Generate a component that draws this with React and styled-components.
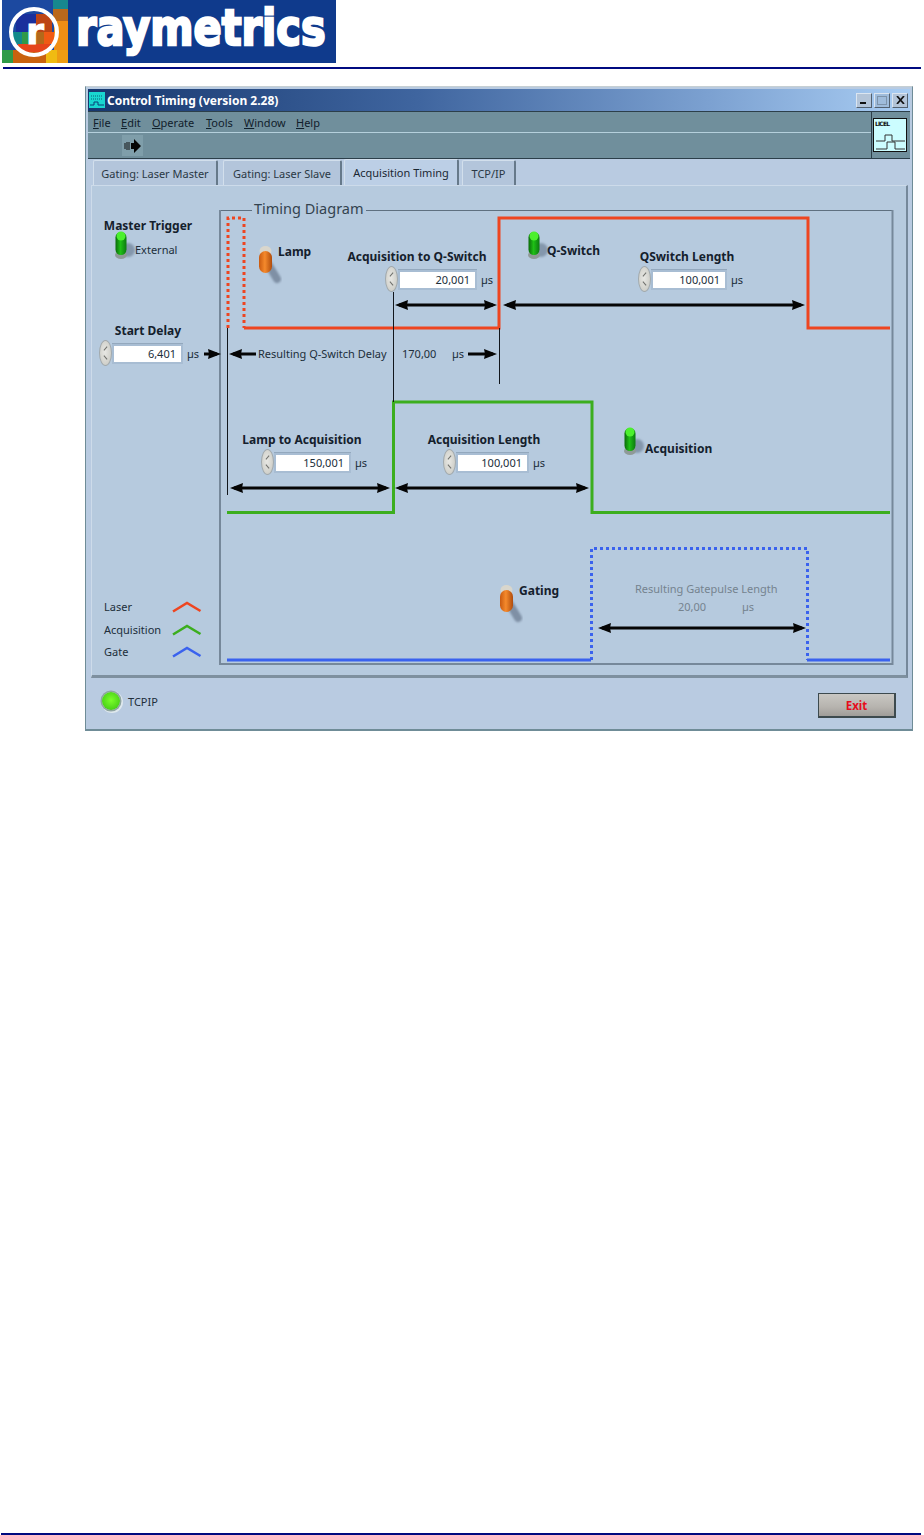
import React from 'react';
import styled, { createGlobalStyle } from 'styled-components';

const UI_FONT = '"Noto Sans", "DejaVu Sans", sans-serif';

const GlobalStyle = createGlobalStyle`
  html, body { margin: 0; padding: 0; background: #fff; }
  body { font-family: ${UI_FONT}; color: #14202c; }
`;

const Page = styled.div`
  width: 924px;
  height: 1535px;
  display: flex;
  flex-direction: column;
  overflow: hidden;
`;

const LogoBar = styled.div`
  margin-left: 2px;
  width: 334px;
  height: 63px;
  background: #0f3a8c;
`;

const HeaderRule = styled.div`
  margin: 4px 3px 0 3px;
  height: 2px;
  background: #000a80;
`;

const FooterRule = styled.div`
  margin: auto 3px 0 1px;
  height: 2px;
  background: #000a80;
`;

const Window = styled.div`
  margin: 17px 0 0 85px;
  width: 828px;
  height: 645px;
  display: flex;
  flex-direction: column;
  background: #b9cbe1;
  border: 1px solid #6f8c97;
  border-top-color: #c6cfd3;
  border-bottom-width: 2px;
  box-sizing: border-box;
  padding: 2px 2px 0 2px;
`;

const TitleBar = styled.div`
  height: 22px;
  display: flex;
  align-items: center;
  padding: 0 2px 0 1px;
  background: linear-gradient(90deg, #17386f 0%, #3f659f 40%, #7ba0d0 75%, #a9cdf3 100%);
`;

const TitleText = styled.span`
  margin-left: 2px;
  flex: 1;
  color: #fff;
  font-size: 12px;
  font-weight: 700;
  white-space: nowrap;
`;

const WindowButton = styled.button`
  width: 16px;
  height: 15px;
  margin-left: 2px;
  padding: 0;
  display: flex;
  align-items: center;
  justify-content: center;
  background: ${({ $disabled }) => ($disabled ? '#9fbcdb' : '#b3c4d8')};
  border: 1px solid;
  border-color: #dbe5f0 #52606e #52606e #dbe5f0;
`;

const MenuArea = styled.div`
  height: 46px;
  display: flex;
  background: #708f9c;
  border-top: 1px solid #2c3f4a;
  border-bottom: 1px solid #2c3f4a;
`;

const MenuColumn = styled.div`
  flex: 1;
  display: flex;
  flex-direction: column;
  border-right: 1px solid #2c3f4a;
`;

const MenuBar = styled.div`
  height: 20px;
  display: grid;
  grid-template-columns: 28px 31px 54px 38px 52px 30px;
  align-items: center;
  padding-left: 5px;
  border-bottom: 1px solid #b5d0dc;
`;

const MenuItem = styled.span`
  font-size: 11px;
  color: #10202b;
  u { text-underline-offset: 1px; }
`;

const ToolBar = styled.div`
  flex: 1;
  display: flex;
  align-items: center;
  padding-left: 34px;
`;

const RunButton = styled.div`
  width: 21px;
  height: 21px;
  display: flex;
  align-items: center;
  justify-content: center;
  background: #7f9eaa;
`;

const IconSlot = styled.div`
  width: 38px;
  padding: 6px 0 0 1px;
  box-sizing: border-box;
`;

const TabStrip = styled.div`
  height: 26px;
  display: flex;
  align-items: flex-end;
  padding-left: 5px;
  background: #b9cbe1;
`;

const Tab = styled.div`
  height: ${({ $active }) => ($active ? 26 : 25)}px;
  width: ${({ $w }) => $w}px;
  margin-left: ${({ $gap }) => $gap}px;
  display: flex;
  align-items: center;
  justify-content: center;
  box-sizing: border-box;
  font-size: 11px;
  white-space: nowrap;
  color: ${({ $active }) => ($active ? '#1a2733' : '#2a3844')};
  background: ${({ $active }) => ($active ? '#bccfe6' : '#b3c5db')};
  border-top: 1px solid #d2dfec;
  border-left: 1px solid #d2dfec;
  border-right: 2px solid #66798a;
  border-radius: 2px 2px 0 0;
`;

const Panel = styled.div`
  position: relative;
  margin: 0 2px 0 3px;
  height: 493px;
  background: #b6cade;
  border-top: 1px solid #cddbea;
  border-left: 1px solid #cddbea;
  border-right: 2px solid #75889a;
  border-bottom: 3px solid #7e909f;
  box-sizing: border-box;
`;

// things below sit on the diagram canvas: coordinates are page pixels minus the panel's inner origin
const ORIGIN_X = 92;
const ORIGIN_Y = 186;

const Wires = styled.svg`
  position: absolute;
  left: 0;
  top: 0;
  width: 814px;
  height: 489px;
`;

const DiagramTitle = styled.span`
  position: absolute;
  left: ${252 - ORIGIN_X}px;
  top: ${199 - ORIGIN_Y}px;
  padding: 0 2px;
  font-size: 14.5px;
  line-height: 18px;
  color: #33434f;
  background: #b6cade;
  white-space: nowrap;
`;

const OnCanvas = styled.div`
  position: absolute;
  left: ${({ $x }) => $x - ORIGIN_X}px;
  top: ${({ $y }) => $y - ORIGIN_Y}px;
`;

const Caption = styled.span`
  display: block;
  font-size: ${({ $bold }) => ($bold ? 12 : 11)}px;
  line-height: 16px;
  font-weight: ${({ $bold }) => ($bold ? 700 : 400)};
  white-space: nowrap;
  color: ${({ $muted, $bold }) => ($muted ? '#75838f' : $bold ? '#14202c' : '#202e3a')};
`;

const ControlBox = styled(OnCanvas)`
  width: ${({ $w }) => $w}px;
  display: flex;
  flex-direction: column;
  align-items: center;
`;

const NumericRow = styled.div`
  align-self: flex-start;
  margin: 1px 0 0 ${({ $inset }) => $inset}px;
  height: 26px;
  display: flex;
  align-items: center;
`;

const Spinner = styled.div`
  position: relative;
  flex: none;
  width: 13px;
  height: 26px;
  box-sizing: border-box;
  border: 1px solid #a2a9ac;
  border-radius: 50%;
  background: radial-gradient(ellipse at 45% 45%, #e8e8e4 0%, #d2d2cc 65%, #b3b4b1 100%);
  &::before, &::after {
    content: '';
    position: absolute;
    left: 3px;
    width: 5px;
    height: 1px;
    background: #6f706c;
  }
  &::before { top: 7px; transform: rotate(-50deg); }
  &::after { bottom: 7px; transform: rotate(50deg); }
`;

const FieldFrame = styled.div`
  padding: 2px;
  background: #a8bdd3;
  border-top: 1px solid #93a8bd;
`;

const Field = styled.div`
  width: ${({ $w }) => $w}px;
  height: 16px;
  box-sizing: border-box;
  padding-right: 5px;
  background: #fff;
  font-size: 11px;
  line-height: 16px;
  text-align: right;
  color: #202e3a;
`;

const Unit = styled.span`
  margin-left: 4px;
  font-size: 11px;
  color: #202e3a;
`;

const ToggleGroup = styled(OnCanvas)`
  display: flex;
  align-items: flex-start;
`;

const ToggleCaption = styled(Caption)`
  margin: ${({ $top }) => $top}px 0 0 ${({ $gap = 0 }) => $gap}px;
`;

const ToggleIcon = styled.svg`
  flex: none;
  width: 19px;
  height: 38px;
  overflow: visible;
`;

const DelayRow = styled(OnCanvas)`
  display: grid;
  grid-template-columns: 144px 50px auto;
`;

const GateReadout = styled(OnCanvas)`
  display: grid;
  grid-template-columns: 43px 64px auto;
  row-gap: 2px;
`;

const GateTitle = styled(Caption)`
  grid-column: 1 / -1;
`;

const TopCaption = styled(OnCanvas)`
  transform: translateX(-50%);
`;

const LegendList = styled(OnCanvas)`
  display: grid;
  grid-template-columns: 68px 30px;
  grid-auto-rows: 22.5px;
  align-items: center;
`;

const LegendIcon = styled.svg`
  display: block;
  width: 30px;
  height: 14px;
`;

const Footer = styled.div`
  flex: 1;
  display: flex;
  align-items: flex-start;
  justify-content: space-between;
  padding: 14px 16px 0 16px;
  margin: 0 -2px;
  background: #b9cbe1;
`;

const StatusGroup = styled.div`
  display: flex;
  align-items: center;
  gap: 8px;
  font-size: 11px;
  color: #202e3a;
`;

const Led = styled.div`
  width: 18px;
  height: 18px;
  border-radius: 50%;
  background: radial-gradient(circle at 50% 45%, #7cff2a 0%, #4fd61a 65%, #2f9a18 100%);
  box-shadow: 0 0 0 1.5px #8fa6a0, 1px 1px 0 2px #dfe8ee;
`;

const ExitButton = styled.button`
  width: 78px;
  height: 25px;
  margin-top: 1px;
  padding: 0;
  font-family: ${UI_FONT};
  font-size: 11.5px;
  font-weight: 700;
  color: #e60d1c;
  background: linear-gradient(180deg, #c9c7c3 0%, #b6b3ae 60%, #a09d99 100%);
  border: 1px solid #3d4a4e;
  border-right-width: 2px;
  border-bottom-width: 2px;
`;

const Arrow = ({ x1, x2, y, left = true, right = true }) => (
  <g fill="#050505">
    <rect x={x1 + (left ? 4 : 0)} y={y - 1.5} width={x2 - x1 - (left ? 4 : 0) - (right ? 4 : 0)} height={3} />
    {left && <polygon points={`${x1},${y} ${x1 + 13},${y - 5} ${x1 + 12},${y} ${x1 + 13},${y + 5}`} />}
    {right && <polygon points={`${x2},${y} ${x2 - 13},${y - 5} ${x2 - 12},${y} ${x2 - 13},${y + 5}`} />}
  </g>
);

const RED = '#ee4520';
const GREEN = '#3cae1e';
const BLUE = '#3a62ee';

const DiagramWires = () => (
  <Wires viewBox={`${ORIGIN_X} ${ORIGIN_Y} 814 489`}>
    <path d="M220 210.5H892" fill="none" stroke="#5f7080" strokeWidth="1" />
    <path d="M220 210V664H892.5V210" fill="none" stroke="#76889a" strokeWidth="2" />
    <path d="M228 328V218H244V328" fill="none" stroke={RED} strokeWidth="3" strokeDasharray="3 3" />
    <path d="M244 328H499V218H808V328H890" fill="none" stroke={RED} strokeWidth="3" />
    <path d="M227 512.5H393.5V402H592V512.5H890" fill="none" stroke={GREEN} strokeWidth="3" />
    <path d="M227 660H591" fill="none" stroke={BLUE} strokeWidth="3" />
    <path d="M591.5 660V548.5H807.5V660" fill="none" stroke={BLUE} strokeWidth="3" strokeDasharray="3 3" />
    <path d="M807 660H890" fill="none" stroke={BLUE} strokeWidth="3" />
    <path d="M227.5 328V495M393.5 292V402M499.5 328V384" stroke="#11161c" strokeWidth="1" />
    <Arrow x1={395} x2={497} y={305} />
    <Arrow x1={503} x2={805} y={305} />
    <Arrow x1={204} x2={221} y={354} left={false} />
    <Arrow x1={229} x2={256} y={354} right={false} />
    <Arrow x1={468} x2={497} y={354} left={false} />
    <Arrow x1={230} x2={390} y={488} />
    <Arrow x1={395} x2={589} y={488} />
    <Arrow x1={598} x2={806} y={628} />
  </Wires>
);

const Toggle = ({ on }) => (
  <ToggleIcon viewBox="0 0 19 38">
    <defs>
      <linearGradient id="lever-on" x1="0" x2="1" y1="0" y2="0">
        <stop offset="0" stopColor="#0a6a0a" />
        <stop offset="0.45" stopColor="#1fc016" />
        <stop offset="1" stopColor="#0c7a10" />
      </linearGradient>
      <linearGradient id="lever-off" x1="0" x2="1" y1="0" y2="0">
        <stop offset="0" stopColor="#c95a10" />
        <stop offset="0.45" stopColor="#f58a2c" />
        <stop offset="1" stopColor="#b04c0c" />
      </linearGradient>
      <filter id="lever-shadow" x="-50%" y="-50%" width="200%" height="200%">
        <feGaussianBlur stdDeviation="1" />
      </filter>
    </defs>
    {on ? (
      <>
        <ellipse cx="13" cy="20" rx="7" ry="7" fill="#8497ac" filter="url(#lever-shadow)" />
        <ellipse cx="6" cy="25" rx="6" ry="4" fill="#8f9a98" />
        <rect x="0.5" y="2" width="11" height="23" rx="5.5" fill="url(#lever-on)" />
        <ellipse cx="6" cy="6" rx="4.5" ry="4.5" fill="#4cf02e" />
      </>
    ) : (
      <>
        <path d="M9 18L18 33" stroke="#7f90a5" strokeWidth="8" strokeLinecap="round" filter="url(#lever-shadow)" />
        <ellipse cx="6.5" cy="5" rx="6" ry="5" fill="#d9d6cc" />
        <rect x="0" y="5" width="13" height="22" rx="6.5" fill="url(#lever-off)" />
      </>
    )}
  </ToggleIcon>
);

const Control = ({ x, y, w, inset, label, width, value }) => (
  <ControlBox $x={x} $y={y} $w={w}>
    <Caption $bold>{label}</Caption>
    <NumericRow $inset={inset}>
      <Spinner />
      <FieldFrame>
        <Field $w={width}>{value}</Field>
      </FieldFrame>
      <Unit>µs</Unit>
    </NumericRow>
  </ControlBox>
);

const Switch = ({ x, y, on, label, bold = true, top, gap }) => (
  <ToggleGroup $x={x} $y={y}>
    <Toggle on={on} />
    <ToggleCaption $bold={bold} $top={top} $gap={gap}>{label}</ToggleCaption>
  </ToggleGroup>
);

const LegendMark = ({ color }) => (
  <LegendIcon viewBox="0 0 30 14">
    <path d="M1 11.5L15 3L28.5 11" fill="none" stroke={color} strokeWidth="2.5" />
  </LegendIcon>
);

const RaymetricsLogo = () => (
  <svg width="334" height="63" viewBox="0 0 334 63">
    <rect width="66" height="63" fill="#1c49a0" />
    <rect x="51" y="0" width="15" height="9" fill="#17888e" />
    <rect x="51" y="9" width="15" height="12" fill="#b9681c" />
    <rect x="52" y="21" width="14" height="30" fill="#ef8e14" />
    <rect x="0" y="50" width="11" height="13" fill="#2f9a48" />
    <rect x="11" y="50" width="33" height="13" fill="#c9620f" />
    <rect x="44" y="50" width="11" height="13" fill="#f0bb12" />
    <rect x="55" y="50" width="11" height="13" fill="#ee9c13" />
    <rect x="14" y="14" width="20" height="18" fill="#1a2f9c" />
    <rect x="34" y="14" width="16" height="18" fill="#bd4515" />
    <rect x="10" y="32" width="10" height="12" fill="#138a8a" />
    <rect x="20" y="32" width="12" height="12" fill="#2f9a48" />
    <rect x="32" y="32" width="10" height="12" fill="#b3691a" />
    <rect x="42" y="32" width="10" height="12" fill="#f05a14" />
    <rect x="16" y="44" width="32" height="8" fill="#e5451a" />
    <circle cx="32" cy="32" r="23" fill="none" stroke="#fff" strokeWidth="4" />
    <text x="24" y="44" fontFamily="DejaVu Sans" fontWeight="700" fontSize="36" fill="#fff" stroke="#fff" strokeWidth="1" textLength="18" lengthAdjust="spacingAndGlyphs">r</text>
    <text transform="translate(74 45) scale(0.8 1)" fontFamily="DejaVu Sans" fontWeight="700" fontSize="50" fill="#fff" stroke="#fff" strokeWidth="2.5" textLength="312" lengthAdjust="spacingAndGlyphs">raymetrics</text>
  </svg>
);

const LicelIcon = () => (
  <svg width="34" height="34" viewBox="0 0 34 34" style={{ display: 'block' }}>
    <rect x="0.5" y="0.5" width="33" height="33" fill="#ccfdff" stroke="#111" />
    <text x="2" y="8" fontFamily="DejaVu Sans" fontWeight="700" fontSize="6" fill="#111" textLength="15">LICEL</text>
    <path d="M3 23H12V17H19V23H32" fill="none" stroke="#333" strokeWidth="1" />
    <path d="M3 31H14V24H22V31H32" fill="none" stroke="#333" strokeWidth="1" />
  </svg>
);

const AppIcon = () => (
  <svg width="16" height="16" viewBox="0 0 16 16">
    <rect width="16" height="16" fill="#19d6d0" />
    <path d="M2 4H14M2 7H14" stroke="#0b5f78" strokeWidth="1" strokeDasharray="1 1" />
    <path d="M1 13H5V10H9V13H15" fill="none" stroke="#0b3f78" strokeWidth="1" />
  </svg>
);

const RunArrow = () => (
  <svg width="18" height="14" viewBox="0 0 18 14">
    <path d="M1 4V10M3 3V11M5 3V11" stroke="#111" strokeWidth="1" />
    <path d="M7 4H10V0L17 7L10 14V10H7Z" fill="#050505" />
  </svg>
);

const MENU = [['F', 'ile'], ['E', 'dit'], ['O', 'perate'], ['T', 'ools'], ['W', 'indow'], ['H', 'elp']];

const TABS = [
  { label: 'Gating: Laser Master', w: 125, gap: 0 },
  { label: 'Gating: Laser Slave', w: 119, gap: 5 },
  { label: 'Acquisition Timing', w: 115, gap: 2, active: true },
  { label: 'TCP/IP', w: 54, gap: 3 },
];

const LEGEND = [['Laser', RED], ['Acquisition', GREEN], ['Gate', BLUE]];

const App = () => (
  <Page>
    <GlobalStyle />
    <LogoBar>
      <RaymetricsLogo />
    </LogoBar>
    <HeaderRule />
    <Window>
      <TitleBar>
        <AppIcon />
        <TitleText>Control Timing (version 2.28)</TitleText>
        <WindowButton aria-label="Minimize">
          <svg width="8" height="8"><rect x="0" y="6" width="6" height="2" fill="#111" /></svg>
        </WindowButton>
        <WindowButton $disabled aria-label="Maximize">
          <svg width="10" height="9"><rect x="0.5" y="0.5" width="9" height="8" fill="none" stroke="#7d93aa" /></svg>
        </WindowButton>
        <WindowButton aria-label="Close">
          <svg width="9" height="8"><path d="M1 0L8 8M8 0L1 8" stroke="#111" strokeWidth="1.7" /></svg>
        </WindowButton>
      </TitleBar>
      <MenuArea>
        <MenuColumn>
          <MenuBar>
            {MENU.map(([key, rest]) => (
              <MenuItem key={key}><u>{key}</u>{rest}</MenuItem>
            ))}
          </MenuBar>
          <ToolBar>
            <RunButton><RunArrow /></RunButton>
          </ToolBar>
        </MenuColumn>
        <IconSlot><LicelIcon /></IconSlot>
      </MenuArea>
      <TabStrip>
        {TABS.map(tab => (
          <Tab key={tab.label} $w={tab.w} $gap={tab.gap} $active={tab.active}>{tab.label}</Tab>
        ))}
      </TabStrip>
      <Panel>
        <DiagramWires />
        <DiagramTitle>Timing Diagram</DiagramTitle>

        <TopCaption $x={148} $y={218}><Caption $bold>Master Trigger</Caption></TopCaption>
        <Switch x={115} y={230} on label="External" bold={false} top={12} gap={1} />
        <Switch x={259} y={246} label="Lamp" top={-2} />
        <Switch x={528} y={230} on label="Q-Switch" top={13} />
        <Switch x={624} y={426} on label="Acquisition" top={15} gap={2} />
        <Switch x={500} y={585} label="Gating" top={-2} />

        <Control x={98} y={323} w={100} inset={1} label="Start Delay" width={67} value="6,401" />
        <Control x={342} y={249} w={150} inset={43} label="Acquisition to Q-Switch" width={75} value="20,001" />
        <Control x={632} y={249} w={110} inset={6} label="QSwitch Length" width={72} value="100,001" />
        <Control x={237} y={432} w={130} inset={24} label="Lamp to Acquisition" width={73} value="150,001" />
        <Control x={419} y={432} w={130} inset={24} label="Acquisition Length" width={69} value="100,001" />

        <DelayRow $x={258} $y={346}>
          <Caption>Resulting Q-Switch Delay</Caption>
          <Caption>170,00</Caption>
          <Caption>µs</Caption>
        </DelayRow>

        <GateReadout $x={635} $y={581}>
          <GateTitle $muted>Resulting Gatepulse Length</GateTitle>
          <Caption $muted>&nbsp;</Caption>
          <Caption $muted>20,00</Caption>
          <Caption $muted>µs</Caption>
        </GateReadout>

        <LegendList $x={104} $y={596}>
          {LEGEND.map(([label, color]) => (
            <React.Fragment key={label}>
              <Caption>{label}</Caption>
              <LegendMark color={color} />
            </React.Fragment>
          ))}
        </LegendList>
      </Panel>
      <Footer>
        <StatusGroup><Led />TCPIP</StatusGroup>
        <ExitButton>Exit</ExitButton>
      </Footer>
    </Window>
    <FooterRule />
  </Page>
);

export default App;
